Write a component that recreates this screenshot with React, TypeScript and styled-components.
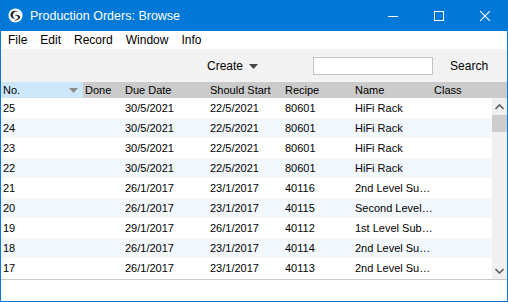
import React from "react";
import * as styledComponents from "styled-components";

const styled = styledComponents.default;
const createGlobalStyle = styledComponents.createGlobalStyle;

type Order = {
  no: string;
  done: string;
  due: string;
  start: string;
  recipe: string;
  name: string;
  cls: string;
};

const orders: Order[] = [
  { no: "25", done: "", due: "30/5/2021", start: "22/5/2021", recipe: "80601", name: "HiFi Rack", cls: "" },
  { no: "24", done: "", due: "30/5/2021", start: "22/5/2021", recipe: "80601", name: "HiFi Rack", cls: "" },
  { no: "23", done: "", due: "30/5/2021", start: "22/5/2021", recipe: "80601", name: "HiFi Rack", cls: "" },
  { no: "22", done: "", due: "30/5/2021", start: "22/5/2021", recipe: "80601", name: "HiFi Rack", cls: "" },
  { no: "21", done: "", due: "26/1/2017", start: "23/1/2017", recipe: "40116", name: "2nd Level Su…", cls: "" },
  { no: "20", done: "", due: "26/1/2017", start: "23/1/2017", recipe: "40115", name: "Second Level…", cls: "" },
  { no: "19", done: "", due: "29/1/2017", start: "26/1/2017", recipe: "40112", name: "1st Level Sub…", cls: "" },
  { no: "18", done: "", due: "26/1/2017", start: "23/1/2017", recipe: "40114", name: "2nd Level Su…", cls: "" },
  { no: "17", done: "", due: "26/1/2017", start: "23/1/2017", recipe: "40113", name: "2nd Level Su…", cls: "" },
];

const columns = "82px 40px 85px 75px 70px 79px 1fr";

export default function App() {
  return (
    <>
      <Global />
      <Window>
        <TitleBar>
          <Logo viewBox="0 0 16 16">
            <circle cx="8" cy="8" r="7.5" fill="#fff" />
            <path d="M2.6 7 C2.8 3.6 7 2 10.6 3.6 C8 3.4 5.4 5 5.2 7.6 C5.1 9.6 6.4 11 8 11.4 C5 12 2.5 9.8 2.6 7 Z" fill="#1c2633" />
            <path d="M7 7.6 C9 6.6 12.2 7 13 9.4 C12.6 12.4 9 14 6.2 12.8 C9 12.6 11 11.2 10.8 9.8 C10.4 8.4 8.6 7.6 7 7.6 Z" fill="#1c2633" />
          </Logo>
          <Title>Production Orders: Browse</Title>
          <Controls>
            <CtrlButton aria-label="Minimize">
              <svg width="10" height="10" viewBox="0 0 10 10">
                <path d="M0 5.5 H10" stroke="#fff" strokeWidth="1" />
              </svg>
            </CtrlButton>
            <CtrlButton aria-label="Maximize">
              <svg width="10" height="10" viewBox="0 0 10 10">
                <rect x="0.5" y="0.5" width="9" height="9" fill="none" stroke="#fff" strokeWidth="1" />
              </svg>
            </CtrlButton>
            <CtrlButton aria-label="Close">
              <svg width="10" height="10" viewBox="0 0 10 10">
                <path d="M0 0 L10 10 M10 0 L0 10" stroke="#fff" strokeWidth="1.1" />
              </svg>
            </CtrlButton>
          </Controls>
        </TitleBar>

        <MenuBar>
          <MenuItem>File</MenuItem>
          <MenuItem>Edit</MenuItem>
          <MenuItem>Record</MenuItem>
          <MenuItem>Window</MenuItem>
          <MenuItem>Info</MenuItem>
        </MenuBar>

        <Toolbar>
          <CreateButton>
            Create
            <svg width="9" height="5" viewBox="0 0 9 5">
              <path d="M0 0 H9 L4.5 5 Z" fill="#444" />
            </svg>
          </CreateButton>
          <SearchInput />
          <SearchButton>Search</SearchButton>
        </Toolbar>

        <HeaderRow>
          <HeadCell $selected>
            No.
            <SortMark viewBox="0 0 9 5">
              <path d="M0 0 H9 L4.5 5 Z" fill="#8a8a8a" />
            </SortMark>
          </HeadCell>
          <HeadCell>Done</HeadCell>
          <HeadCell>Due Date</HeadCell>
          <HeadCell>Should Start</HeadCell>
          <HeadCell>Recipe</HeadCell>
          <HeadCell>Name</HeadCell>
          <HeadCell>Class</HeadCell>
        </HeaderRow>

        <ListArea>
          <Rows>
            {orders.map((o, i) => (
              <Row key={o.no} $striped={i % 2 === 1}>
                <Cell>{o.no}</Cell>
                <Cell>{o.done}</Cell>
                <Cell>{o.due}</Cell>
                <Cell>{o.start}</Cell>
                <Cell>{o.recipe}</Cell>
                <Cell>{o.name}</Cell>
                <Cell>{o.cls}</Cell>
              </Row>
            ))}
          </Rows>
          <ScrollBar>
            <ScrollArrow>
              <svg width="9" height="6" viewBox="0 0 9 6">
                <path d="M0.5 5 L4.5 1 L8.5 5" fill="none" stroke="#606060" strokeWidth="1.6" />
              </svg>
            </ScrollArrow>
            <Thumb />
            <Track />
            <ScrollArrow>
              <svg width="9" height="6" viewBox="0 0 9 6">
                <path d="M0.5 1 L4.5 5 L8.5 1" fill="none" stroke="#606060" strokeWidth="1.6" />
              </svg>
            </ScrollArrow>
          </ScrollBar>
        </ListArea>

        <Footer />
      </Window>
    </>
  );
}

const Global = createGlobalStyle`
  html, body {
    margin: 0;
    padding: 0;
    background: #fff;
  }
  body {
    font-family: "Liberation Sans", Arial, sans-serif;
    color: #000;
  }
`;

const Window = styled.div`
  width: 508px;
  height: 302px;
  box-sizing: border-box;
  border: 1px solid #0a78d4;
  border-top: none;
  display: flex;
  flex-direction: column;
  background: #fff;
  overflow: hidden;
`;

const TitleBar = styled.div`
  height: 31px;
  flex: none;
  display: flex;
  align-items: center;
  background: #0078d7;
  color: #fff;
  margin: 0 -1px;
  padding-left: 8px;
`;

const Logo = styled.svg`
  width: 15px;
  height: 15px;
  flex: none;
`;

const Title = styled.div`
  margin-left: 7px;
  font-size: 12.5px;
  flex: 1;
`;

const Controls = styled.div`
  display: flex;
  height: 100%;
`;

const CtrlButton = styled.div`
  width: 46px;
  height: 100%;
  display: flex;
  align-items: center;
  justify-content: center;
`;

const MenuBar = styled.div`
  height: 18px;
  flex: none;
  display: flex;
  align-items: center;
  gap: 13px;
  padding-left: 7px;
  font-size: 12px;
`;

const MenuItem = styled.span``;

const Toolbar = styled.div`
  height: 33px;
  flex: none;
  display: flex;
  align-items: center;
  background: #f2f2f2;
  padding-left: 206px;
  font-size: 12px;
`;

const CreateButton = styled.div`
  display: flex;
  align-items: center;
  gap: 6px;

  svg {
    margin-top: 1px;
  }
`;

const SearchInput = styled.div`
  margin-left: 55px;
  width: 118px;
  height: 16px;
  background: #fff;
  border: 1px solid #c4c4c4;
`;

const SearchButton = styled.div`
  margin-left: 17px;
`;

const HeaderRow = styled.div`
  height: 16px;
  flex: none;
  display: grid;
  grid-template-columns: ${columns};
  align-items: stretch;
  background: #cbcbcb;
  font-size: 11px;
`;

const HeadCell = styled.div<{ $selected?: boolean }>`
  display: flex;
  align-items: center;
  justify-content: space-between;
  padding-left: 2px;
  padding-right: 5px;
  background: ${p => (p.$selected ? "#cce6fa" : "transparent")};
  white-space: nowrap;
  overflow: hidden;
`;

const SortMark = styled.svg`
  width: 9px;
  height: 5px;
`;

const ListArea = styled.div`
  height: 181px;
  flex: none;
  display: flex;
  border-bottom: 1px solid #c9c9c9;
`;

const Rows = styled.div`
  flex: 1;
  display: flex;
  flex-direction: column;
`;

const Row = styled.div<{ $striped: boolean }>`
  height: 20px;
  display: grid;
  grid-template-columns: ${columns};
  align-items: center;
  background: ${p => (p.$striped ? "#f2f7fc" : "#fff")};
  font-size: 11px;
`;

const Cell = styled.div`
  padding-left: 2px;
  white-space: nowrap;
  overflow: hidden;
`;

const ScrollBar = styled.div`
  width: 15px;
  flex: none;
  display: flex;
  flex-direction: column;
  background: #f0f0f0;
`;

const ScrollArrow = styled.div`
  height: 17px;
  display: flex;
  align-items: center;
  justify-content: center;
`;

const Thumb = styled.div`
  height: 17px;
  background: #cdcdcd;
`;

const Track = styled.div`
  flex: 1;
`;

const Footer = styled.div`
  flex: 1;
  background: #fff;
`;
